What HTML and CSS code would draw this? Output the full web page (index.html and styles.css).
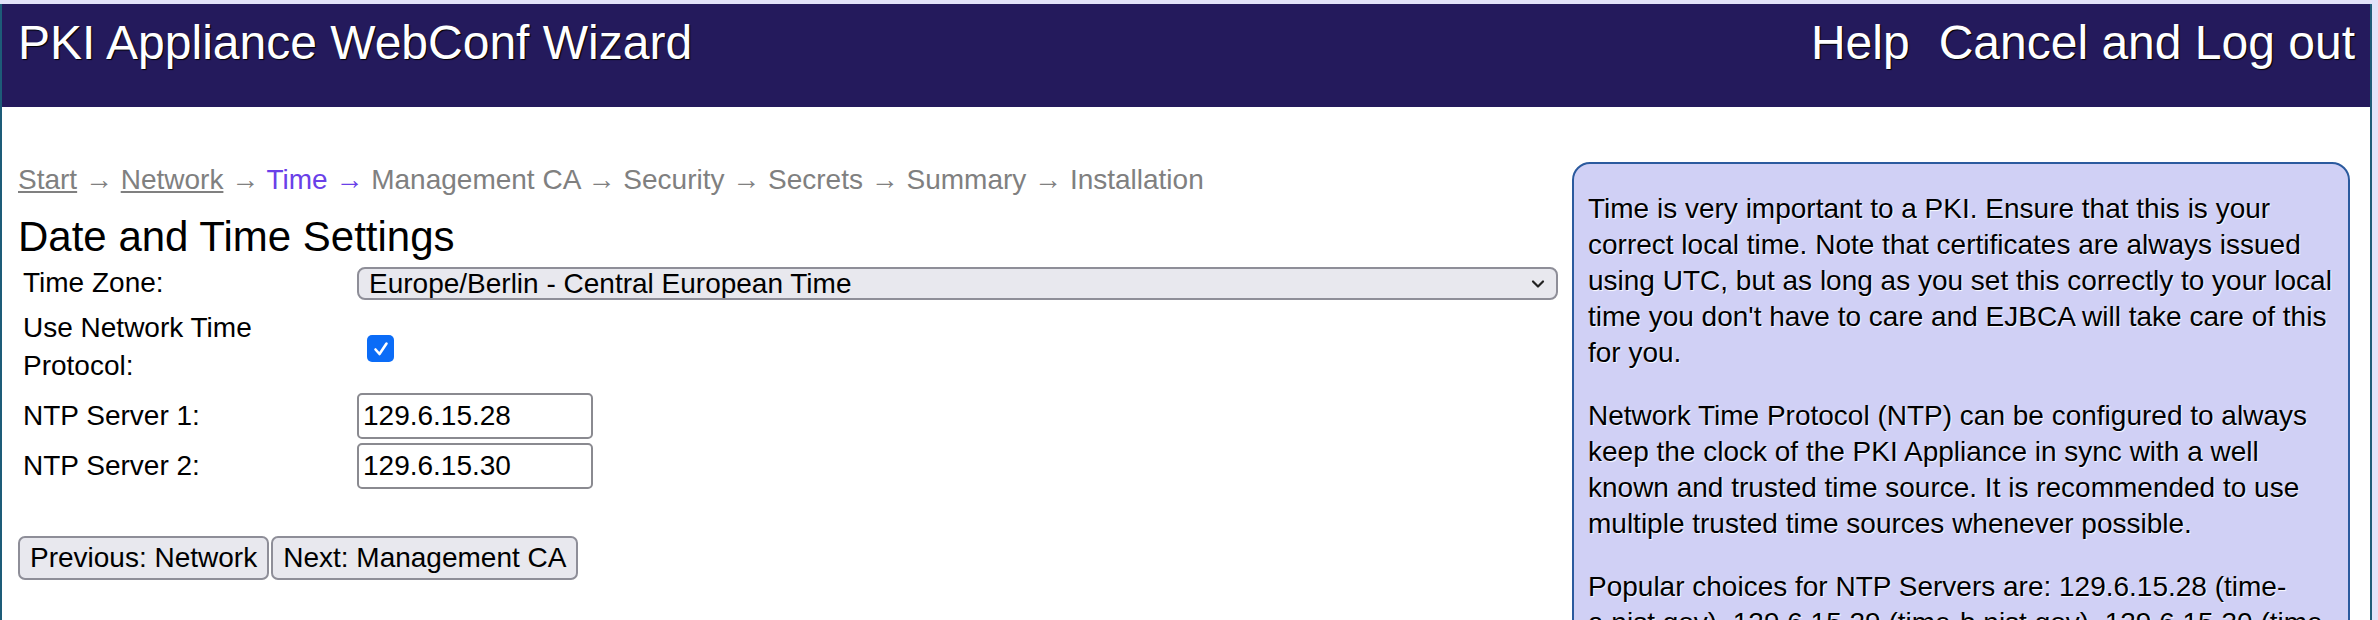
FILE: index.html
```html
<!DOCTYPE html>
<html lang="en">
<head>
<meta charset="utf-8">
<title>PKI Appliance WebConf Wizard</title>
<link rel="stylesheet" href="styles.css">
</head>
<body>
<div class="frame">
  <header class="topbar">
    <span class="title">PKI Appliance WebConf Wizard</span>
    <nav class="topnav">
      <a href="#" class="toplink">Help</a>
      <a href="#" class="toplink">Cancel and Log out</a>
    </nav>
  </header>
  <div class="content">
    <main class="wizard">
      <p class="steps"><a href="#" class="step-done">Start</a> &rarr; <a href="#" class="step-done">Network</a> &rarr; <span class="step-current">Time &rarr;</span> Management CA &rarr; Security &rarr; Secrets &rarr; Summary &rarr; Installation</p>
      <h2 class="section-title">Date and Time Settings</h2>
      <table class="form">
        <tr>
          <td class="label">Time Zone:</td>
          <td class="field">
            <div class="select-wrap">
              <select class="select">
                <option>Europe/Berlin - Central European Time</option>
              </select>
              <svg class="chevron" width="16" height="12" viewBox="0 0 16 12"><path d="M3 3.5 L8 8.5 L13 3.5" fill="none" stroke="#222" stroke-width="2.2" stroke-linecap="round" stroke-linejoin="round"/></svg>
            </div>
          </td>
        </tr>
        <tr class="row-tall">
          <td class="label">Use Network Time Protocol:</td>
          <td class="field">
            <span class="checkbox"><svg width="26" height="26" viewBox="0 0 26 26"><path d="M7.5 13.5 L11.5 18 L18.5 7.5" fill="none" stroke="#fff" stroke-width="2.6" stroke-linecap="round" stroke-linejoin="round"/></svg></span>
          </td>
        </tr>
        <tr>
          <td class="label">NTP Server 1:</td>
          <td class="field"><input class="text" type="text" value="129.6.15.28"></td>
        </tr>
        <tr>
          <td class="label">NTP Server 2:</td>
          <td class="field"><input class="text" type="text" value="129.6.15.30"></td>
        </tr>
      </table>
      <div class="buttons">
        <button class="btn">Previous: Network</button><button class="btn">Next: Management CA</button>
      </div>
    </main>
    <aside class="info">
      <p>Time is very important to a PKI. Ensure that this is your correct local time. Note that certificates are always issued using UTC, but as long as you set this correctly to your local time you don't have to care and EJBCA will take care of this for you.</p>
      <p>Network Time Protocol (NTP) can be configured to always keep the clock of the PKI Appliance in sync with a well known and trusted time source. It is recommended to use multiple trusted time sources whenever possible.</p>
      <p>Popular choices for NTP Servers are: 129.6.15.28 (time-a.nist.gov), 129.6.15.29 (time-b.nist.gov), 129.6.15.30 (time-c.nist.gov).</p>
    </aside>
  </div>
</div>
</body>
</html>
```
FILE: styles.css
```css
html, body {
  margin: 0;
  padding: 0;
}
body {
  background: #e2e2f8;
  font-family: "Liberation Sans", Arial, Helvetica, sans-serif;
  font-size: 28px;
  color: #000;
  padding-top: 4px;
  height: 616px;
  overflow: hidden;
}
.frame {
  width: 2368px;
  background: #fff;
  border-left: 2px solid #1d5c78;
  border-right: 2px solid #1d5c78;
  min-height: 700px;
}
.topbar {
  background: #241a5c;
  height: 103px;
  display: flex;
  justify-content: space-between;
  align-items: flex-start;
  padding: 11px 15px 0 16px;
  box-sizing: border-box;
  color: #fff;
  font-size: 48px;
  line-height: 56px;
  text-shadow: 1px 1px 1px #000;
}
.topnav {
  display: flex;
  gap: 29px;
}
.toplink {
  color: #fff;
  text-decoration: none;
}
.content {
  display: flex;
  align-items: flex-start;
  padding: 55px 20px 0 16px;
  gap: 9px;
}
.wizard {
  flex: 1;
}
.steps {
  margin: 0;
  line-height: 35px;
  color: #808080;
}
.step-done {
  color: #808080;
  text-decoration: underline;
}
.step-current {
  color: #6a40e8;
}
.section-title {
  margin: 16px 0 0;
  font-size: 42px;
  line-height: 48px;
  font-weight: normal;
}
.form {
  width: 100%;
  border-spacing: 2px;
  margin-left: -2px;
}
.form td {
  padding: 1px;
}
.form .row-tall td {
  padding-top: 4px;
  padding-bottom: 5px;
}
.label {
  width: 330px;
  padding-left: 5px !important;
  line-height: 38px;
  vertical-align: middle;
}
.field {
  vertical-align: middle;
}
.select-wrap {
  position: relative;
}
.select {
  appearance: none;
  -webkit-appearance: none;
  width: 100%;
  height: 33px;
  box-sizing: border-box;
  border: 2px solid #8e8e98;
  border-radius: 8px;
  background: #e8e8ee;
  font-family: inherit;
  font-size: 28px;
  line-height: 29px;
  padding: 0 40px 0 10px;
  color: #000;
}
.chevron {
  position: absolute;
  right: 12px;
  top: 11px;
}
.checkbox {
  display: inline-flex;
  width: 27px;
  height: 27px;
  border-radius: 5px;
  background: #0b6cf7;
  margin-left: 10px;
  vertical-align: middle;
  align-items: center;
  justify-content: center;
}
.text {
  width: 236px;
  height: 46px;
  box-sizing: border-box;
  border: 2px solid #8a8a90;
  border-radius: 5px;
  font-family: inherit;
  font-size: 28px;
  padding: 0 4px;
  color: #000;
}
.buttons {
  margin-top: 44px;
  display: flex;
  gap: 2px;
}
.btn {
  height: 44px;
  font-family: inherit;
  font-size: 28px;
  padding: 0 10px;
  background: #e8e8ee;
  border: 2px solid #8e8e98;
  border-radius: 7px;
  color: #000;
}
.info {
  width: 778px;
  box-sizing: border-box;
  background: #d0d0f5;
  border: 2px solid #2b5a9e;
  border-radius: 18px;
  padding: 0 14px;
  line-height: 36px;
  text-shadow: 1px 1px 1px rgba(255, 255, 255, 0.9);
  min-height: 600px;
}
.info p {
  margin: 27px 0;
}
```
